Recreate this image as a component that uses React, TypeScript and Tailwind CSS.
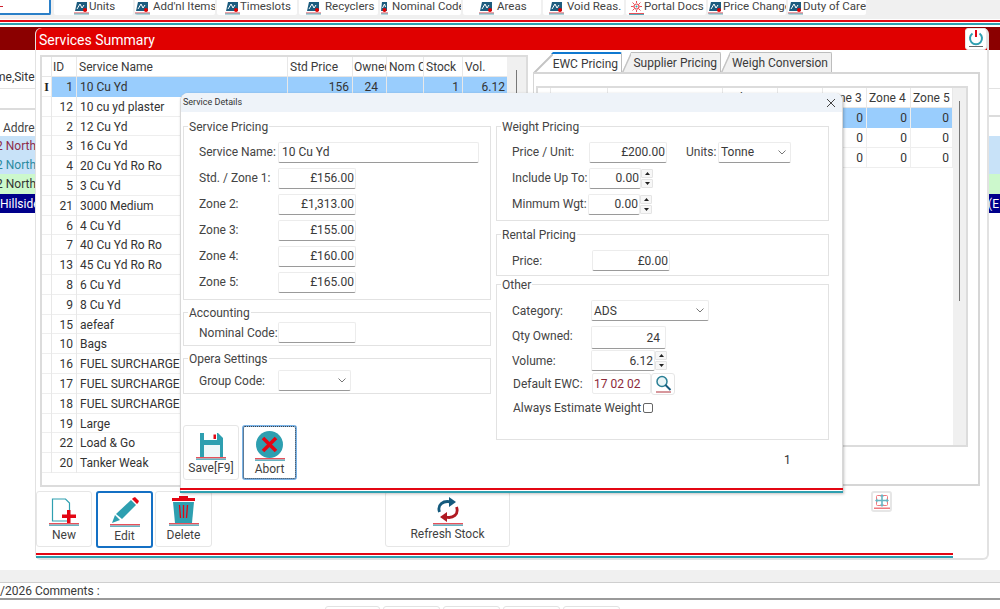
import React from "react";

const tools: [string, number, number, number, string][] = [
  ["Units", 79, 20, 0, "chart"],
  ["Add'nl Items", 80, 0, 3, "chart"],
  ["Timeslots", 80, 8, 0, "chart"],
  ["Recyclers", 79, 7, 4, "chart"],
  ["Nominal Code", 81, 1, 4, "narrow"],
  ["Areas", 78, 16, 3, "chart"],
  ["Void Reas.", 81, 6, 3, "chart"],
  ["Portal Docs", 80, 3, 0, "portal"],
  ["Price Change", 78, 0, 0, "chart"],
  ["Duty of Care", 78, 0, 0, "chart"],
];

const services: [number, string][] = [
  [1, "10 Cu Yd"], [12, "10 cu yd plaster"], [2, "12 Cu Yd"], [3, "16 Cu Yd"], [4, "20 Cu Yd Ro Ro"],
  [5, "3 Cu Yd"], [21, "3000 Medium"], [6, "4 Cu Yd"], [7, "40 Cu Yd Ro Ro"], [13, "45 Cu Yd Ro Ro"],
  [8, "6 Cu Yd"], [9, "8 Cu Yd"], [15, "aefeaf"], [10, "Bags"], [16, "FUEL SURCHARGE"],
  [17, "FUEL SURCHARGE"], [18, "FUEL SURCHARGE"], [19, "Large"], [22, "Load & Go"], [20, "Tanker Weak"],
];

function ToolIcon({ kind }: { kind: string }) {
  if (kind === "portal") {
    return (
      <svg width="15" height="14" viewBox="0 0 15 14" className="shrink-0">
        <circle cx="7.5" cy="5.500" r="2.500" fill="#fff" stroke="#e8505a" strokeWidth="1.200" />
        <path d="M7.500 0v2M7.500 9v2M2 5.500h2.500M10.500 5.500H13M3.500 1.500l1.500 1.500M11.500 1.500L10 3M3.500 9.500L5 8M11.500 9.500L10 8" stroke="#e8505a" strokeWidth="1" />
        <circle cx="7.500" cy="5.500" r="1" fill="#2e9fb0" />
        <rect x="0" y="12" width="15" height="1" fill="#e8505a" />
        <rect x="0" y="13" width="15" height="1" fill="#5aa9b8" />
      </svg>
    );
  }
  if (kind === "narrow") {
    return (
      <svg width="7" height="14" viewBox="0 0 7 14" className="shrink-0">
        <path d="M1 1h5v9H0z" fill="#1d5c7e" />
        <path d="M1.500 7l2-4 1 3" stroke="#fff" strokeWidth="1" fill="none" />
        <circle cx="3.500" cy="9" r="2" fill="#e00000" />
        <rect x="0" y="11.500" width="7" height="1" fill="#d9434e" />
        <rect x="0" y="12.500" width="7" height="1" fill="#5aa9b8" />
      </svg>
    );
  }
  return (
    <svg width="15" height="14" viewBox="0 0 15 14" className="shrink-0">
      <path d="M3 1h10v9H1z" fill="#1d5c7e" />
      <path d="M3 8l3-5 2 4 2-3" stroke="#fff" strokeWidth="1" fill="none" />
      <circle cx="11" cy="9" r="2" fill="#e00000" />
      <rect x="0" y="11.5" width="15" height="1" fill="#d9434e" />
      <rect x="0" y="12.5" width="15" height="1" fill="#5aa9b8" />
    </svg>
  );
}

function Underline({ w = 30 }: { w?: number }) {
  return (
    <svg width={w} height="3" viewBox={`0 0 ${w} 3`} className="block shrink-0">
      <rect width={w} height="1.5" fill="#e8505a" />
      <rect y="1.5" width={w} height="1.5" fill="#68b4c2" />
    </svg>
  );
}

function NewIcon() {
  return (
    <svg width="27" height="25" viewBox="0 0 27 25">
      <path d="M1.500 1h13l4 4v18h-17z" fill="#fff" stroke="#2e9fb0" strokeWidth="1.2" />
      <path d="M16 12h3.500v4.500H25V20h-5.500v5H16v-5h-5v-3.500h5z" fill="#e30613" />
    </svg>
  );
}
function EditIcon() {
  return (
    <svg width="28" height="27" viewBox="0 0 28 27">
      <path d="M22 1l2-1 4 4-1 2-1 1-5-5z" fill="#e30613" />
      <path d="M20 3l5 5L11 22l-6-5z" fill="#2e9fb0" />
      <path d="M4 18l5 5-8 3z" fill="#2e9fb0" />
    </svg>
  );
}
function DeleteIcon() {
  return (
    <svg width="23" height="27" viewBox="0 0 23 27">
      <path d="M7 2V0h9v2h7v3H0V2z" fill="#e30613" />
      <path d="M1 6h21l-2 21H3z" fill="#2e9fb0" />
      <path d="M7.500 9l1 13M11.500 9v13M15.500 9l-1 13" stroke="#e30613" strokeWidth="1.3" />
    </svg>
  );
}
function RefreshIcon() {
  return (
    <svg width="22" height="26" viewBox="0 0 22 26">
      <path d="M2.500 15C0 8 6 3 14 5" stroke="#155a7d" strokeWidth="2.800" fill="none" />
      <path d="M12 0l7 5-7 5z" fill="#155a7d" />
      <path d="M19.500 10c2.500 7-3 12-11 10" stroke="#b01a22" strokeWidth="2.800" fill="none" />
      <path d="M10 25l-7-5 7-5z" fill="#b01a22" />
    </svg>
  );
}
function SaveIcon() {
  return (
    <svg width="25" height="24" viewBox="0 0 25 24">
      <path d="M1 0h18l5 5v19H1z" fill="#2e9fb0" />
      <rect x="5" y="0" width="13" height="7" fill="#fff" />
      <rect x="14.500" y="1.500" width="2.500" height="4.500" fill="#e30613" />
      <rect x="5" y="12" width="16" height="12" fill="#eef7f9" />
    </svg>
  );
}
function AbortIcon() {
  return (
    <svg width="27" height="27" viewBox="0 0 27 27">
      <circle cx="13.5" cy="13.5" r="13.5" fill="#2e9fb0" />
      <path d="M7 7l13 13M20 7L7 20" stroke="#e30613" strokeWidth="3.6" />
    </svg>
  );
}
function PowerIcon() {
  return (
    <svg width="16" height="18" viewBox="0 0 16 18">
      <path d="M4.500 3.500a6 6 0 1 0 7 0" stroke="#2e9fb0" strokeWidth="2" fill="none" />
      <rect x="7" y="0" width="2" height="7" fill="#e30613" />
      <rect x="1" y="16" width="14" height="1" fill="#666" />
    </svg>
  );
}
function SearchIcon() {
  return (
    <svg width="17" height="18" viewBox="0 0 17 18">
      <circle cx="7" cy="6.500" r="5" fill="#eaf5f7" stroke="#2a7f95" strokeWidth="1.500" />
      <path d="M10.500 10l5 5" stroke="#155a7d" strokeWidth="2" />
      <rect x="1" y="16.500" width="15" height="1" fill="#b0303a" />
    </svg>
  );
}
function FitIcon() {
  return (
    <svg width="16" height="16" viewBox="0 0 16 16">
      <rect x="2.500" y="1.500" width="11" height="10" rx="1" fill="none" stroke="#f07a80" strokeWidth="1" />
      <path d="M8 1v11M2 6.500h12" stroke="#68b4c2" strokeWidth="1.600" />
      <path d="M8 0l2 2.500H6zM8 13l2-2.500H6zM1 6.500l2.500-2v4zM15 6.500l-2.500-2v4z" fill="#68b4c2" />
      <rect x="0" y="13.500" width="16" height="1.500" fill="#f07a80" />
    </svg>
  );
}

function Chevron() {
  return (
    <svg width="8" height="5" viewBox="0 0 8 5" className="shrink-0">
      <path d="M.5.5L4 4 7.500.5" fill="none" stroke="#777" strokeWidth="1" />
    </svg>
  );
}

function Group({ title, className, children }: { title: string; className: string; children?: React.ReactNode }) {
  return (
    <div className={"relative border border-[#e2e2e2] " + className}>
      <span className="absolute -top-[9px] left-[4px] bg-white px-[1px] text-[12px] leading-[18px] text-[#444]">{title}</span>
      {children}
    </div>
  );
}

function Field({ value, className, align = "right", wide }: { value: string; className: string; align?: "left" | "right"; wide?: boolean }) {
  return (
    <div
      className={
        "flex items-center shrink-0 rounded-[2px] border border-[#ececec] border-b-[#9a9a9a] bg-white pl-[3px] text-[12px] text-[#3a3a3a] " +
        (wide ? "pr-[5px] " : "pr-[1px] ") +
        (align === "right" ? "justify-end " : "justify-start ") +
        className
      }
    >
      {value}
    </div>
  );
}

function Select({ value, className }: { value: string; className: string }) {
  return (
    <div
      className={
        "flex items-center justify-between shrink-0 rounded-[2px] border border-[#ececec] border-b-[#9a9a9a] bg-white pl-[2px] pr-[4px] text-[12px] text-[#3a3a3a] " +
        className
      }
    >
      <span>{value}</span>
      <Chevron />
    </div>
  );
}

function Spinner() {
  return (
    <div className="flex h-[19px] w-[12px] shrink-0 flex-col gap-[1px]">
      <div className="flex h-[9px] items-center justify-center rounded-[1px] border border-[#e4e4e4] bg-[#f7f7f7] text-[#222]">
        <svg width="5" height="3" viewBox="0 0 5 3"><path d="M2.500 0L5 3H0z" fill="#222" /></svg>
      </div>
      <div className="flex h-[9px] items-center justify-center rounded-[1px] border border-[#e4e4e4] bg-[#f7f7f7]">
        <svg width="5" height="3" viewBox="0 0 5 3"><path d="M0 0h5L2.500 3z" fill="#222" /></svg>
      </div>
    </div>
  );
}

function Label({ children, className = "" }: { children: React.ReactNode; className?: string }) {
  return <span className={"shrink-0 whitespace-nowrap text-[12px] text-[#444] " + className}>{children}</span>;
}

function ActionBtn({
  icon, label, w, u = 30, active, dotted, labelClass = "",
}: {
  icon: React.ReactNode; label: string; w: string; u?: number; active?: boolean; dotted?: boolean; labelClass?: string;
}) {
  return (
    <div
      className={
        "flex shrink-0 flex-col items-center rounded-[3px] bg-white text-[12px] text-[#3f3f3f] " +
        (active ? "border-2 border-[#1470c4] " : dotted ? "border-2 border-[#79b2e6] outline-1 -outline-offset-2 outline-dotted outline-[#444] " : "border border-[#e6e6e6] ") +
        w
      }
    >
      <div className="mt-[2px] flex h-[29px] w-full items-end justify-center">{icon}</div>
      <Underline w={u} />
      <span className={"leading-[17px] whitespace-nowrap " + labelClass}>{label}</span>
    </div>
  );
}

function DoubleLine({ className = "" }: { className?: string }) {
  return (
    <div className={"flex flex-col gap-[1px] " + className}>
      <div className="h-[2px] bg-[#e30613]" />
      <div className="h-[2px] bg-[#2e9fb0]" />
    </div>
  );
}

function ServicesGrid() {
  const cols = "grid grid-cols-[10px_25px_211px_65px_34px_37px_39px_44px] w-[465px]";
  return (
    <div className="flex h-[432px] w-[488px] shrink-0 border-2 border-[#dcdcdc] bg-white">
      <div className="w-[465px] shrink-0">
        <div className={cols + " h-[20px] border-b border-[#e6e6e6] text-[12px] leading-[20px] text-[#3a3a3a]"}>
          <div className="border-r border-[#e8e8e8]" />
          <div className="border-r border-[#e8e8e8] pl-[1px]">ID</div>
          <div className="border-r border-[#e8e8e8] pl-[2px]">Service Name</div>
          <div className="border-r border-[#e8e8e8] pl-[2px]">Std Price</div>
          <div className="overflow-hidden whitespace-nowrap border-r border-[#e8e8e8] pl-[1px]">Owned</div>
          <div className="overflow-hidden whitespace-nowrap border-r border-[#e8e8e8] pl-[2px]">Nom Code</div>
          <div className="border-r border-[#e8e8e8] pl-[2px]">Stock</div>
          <div className="pl-[2px]">Vol.</div>
        </div>
        {services.map(([id, name], i) => (
          <div key={id} className={cols + " h-[19.8px] border-b border-[#eeeeee] text-[12px] leading-[20px] text-[#333]"}>
            <div className="flex items-center justify-center border-r border-[#e8e8e8] font-['Liberation_Serif',serif] text-[12px] font-bold text-[#222]">
              {i === 0 ? "I" : ""}
            </div>
            <div className={"border-r border-[#e8e8e8] pr-[3px] text-right " + (i === 0 ? "bg-[#99cdfd]" : "")}>{id}</div>
            <div className={"whitespace-nowrap border-r border-[#e8e8e8] pl-[3px] " + (i === 0 ? "bg-[#99cdfd]" : "")}>{name}</div>
            <div className={"border-r border-[#e8e8e8] pr-[3px] text-right " + (i === 0 ? "bg-[#99cdfd]" : "")}>{i === 0 ? "156" : ""}</div>
            <div className={"border-r border-[#e8e8e8] pr-[8px] text-right " + (i === 0 ? "bg-[#99cdfd]" : "")}>{i === 0 ? "24" : ""}</div>
            <div className={"border-r border-[#e8e8e8] " + (i === 0 ? "bg-[#99cdfd]" : "")} />
            <div className={"border-r border-[#e8e8e8] pr-[3px] text-right " + (i === 0 ? "bg-[#99cdfd]" : "")}>{i === 0 ? "1" : ""}</div>
            <div className={"pr-[2px] text-right " + (i === 0 ? "bg-[#99cdfd]" : "")}>{i === 0 ? "6.12" : ""}</div>
          </div>
        ))}
      </div>
      <div className="flex flex-1 justify-center bg-[#f0f0f0] pt-[13px]">
        <div className="h-[90px] w-[1px] bg-[#777]" />
      </div>
    </div>
  );
}

function Tab({ label, w, active }: { label: string; w: string; active?: boolean }) {
  return (
    <div
      className={
        "relative flex h-[20px] shrink-0 items-center justify-end rounded-tr-[2px] pr-[3px] pt-[1px] text-[12px] whitespace-nowrap text-[#3a3a3a] " +
        (active
          ? "border-t-2 border-r border-t-[#0f78d0] border-r-[#bdbdbd] bg-white [clip-path:polygon(20px_0,100%_0,100%_100%,0_100%)] "
          : "border-t border-r border-[#bdbdbd] bg-[#f1f1f1] [clip-path:polygon(9px_0,100%_0,100%_100%,0_100%)] ") +
        w
      }
    >
      <svg width={active ? 20 : 9} height="20" className="absolute left-0 top-0">
        <line x1="0" y1="20" x2={active ? 20 : 9} y2="0" stroke="#c4c4c4" strokeWidth="2" />
      </svg>
      {label}
    </div>
  );
}

function TabsPanel() {
  const cols = "grid grid-cols-[13px_57px_115px_55px_45px_44px_44px_42px] w-[415px]";
  const head = ["", "", "Description", "Std Price", "Zone 2", "Zone 3", "Zone 4", "Zone 5"];
  return (
    <div className="-mt-[3px] flex w-[447px] shrink-0 flex-col">
      <div className="flex h-[20px]">
        <Tab label="EWC Pricing" w="w-[89px]" active />
        <Tab label="Supplier Pricing" w="w-[99px]" />
        <Tab label="Weigh Conversion" w="w-[111px]" />
      </div>
      <div className="relative h-[414px] border-r-2 border-b-2 border-t-2 border-l border-[#d6d6d6] bg-white pl-[2px] pt-[12px]">
        <div className="flex h-[361px] w-[432px] border-2 border-[#dcdcdc]">
          <div className="w-[415px] shrink-0">
            <div className={cols + " h-[20px] border-b border-[#e6e6e6] text-[12px] leading-[20px] text-[#3a3a3a]"}>
              {head.map((h, i) => (
                <div key={i} className="whitespace-nowrap border-r border-[#e8e8e8] pl-[2px]">{h}</div>
              ))}
            </div>
            {[0, 1, 2].map((r) => (
              <div key={r} className={cols + " h-[20px] border-b border-[#eeeeee] text-[12px] leading-[20px] text-[#333]"}>
                {head.map((_, i) => (
                  <div key={i} className={"border-r border-[#eeeeee] pr-[3px] text-right " + (r === 0 && i > 0 ? "bg-[#99cdfd]" : "")}>
                    {i >= 5 ? "0" : ""}
                  </div>
                ))}
              </div>
            ))}
          </div>
          <div className="flex flex-1 justify-center bg-[#f0f0f0] pt-[13px]">
            <div className="h-[200px] w-[1px] bg-[#777]" />
          </div>
        </div>
      </div>
    </div>
  );
}

function SummaryWindow() {
  return (
    <div className="absolute left-[35px] top-[28px] flex h-[532px] w-[954px] flex-col rounded-[6px] border-r-2 border-b-2 border-l border-[#e2e2e2] bg-white">
      <div className="flex h-[22px] shrink-0 items-center justify-between rounded-t-[6px] bg-[#e00000] pl-[3px]">
        <span className="translate-y-[1px] text-[14px] text-white">Services Summary</span>
        <div className="flex h-[22px] w-[22px] items-center justify-center rounded-[3px] border border-[#e6e6e6] bg-white">
          <PowerIcon />
        </div>
      </div>
      <div className="flex gap-[5px] pl-[4px] pt-[5px]">
        <ServicesGrid />
        <TabsPanel />
      </div>
      <div className="mt-[4px] flex items-start">
        <ActionBtn icon={<NewIcon />} label="New" w="h-[56px] w-[56px]" labelClass="mt-[1px]" />
        <ActionBtn icon={<EditIcon />} label="Edit" w="ml-[4px] h-[57px] w-[57px]" active labelClass="mt-[1px]" />
        <ActionBtn icon={<DeleteIcon />} label="Delete" w="ml-[2px] h-[56px] w-[57px]" labelClass="mt-[1px]" />
        <ActionBtn icon={<RefreshIcon />} label="Refresh Stock" w="ml-[173px] h-[56px] w-[125px]" />
        <div className="ml-[361px] flex h-[21px] w-[21px] items-center justify-center rounded-[3px] border-2 border-[#e6e6e6] bg-white">
          <FitIcon />
        </div>
      </div>
      <DoubleLine className="mt-[5px] w-[917px]" />
    </div>
  );
}

function DetailsDialog() {
  return (
    <div className="absolute left-[180px] top-[93px] flex h-[400px] w-[663px] flex-col rounded-t-[8px] border-x border-[#d8d8d8] bg-white shadow-[1px_1px_3px_rgba(0,0,0,0.25)]">
      <div className="flex h-[19px] shrink-0 items-center justify-between rounded-t-[8px] bg-[#eef3f9] pl-[2px] pr-[6px]">
        <span className="text-[9px] text-[#333]">Service Details</span>
        <svg width="10" height="10" viewBox="0 0 10 10"><path d="M1 1l8 8M9 1L1 9" stroke="#444" strokeWidth="1" /></svg>
      </div>
      <div className="flex flex-1 gap-[5px] pl-[2px] pt-[14px]">
        <div className="flex w-[308px] shrink-0 flex-col">
          <Group title="Service Pricing" className="h-[174px]">
            <div className="flex flex-col gap-[6px] pl-[15px] pt-[15px]">
              <div className="flex h-[20px] items-center">
                <Label className="w-[79px]">Service Name:</Label>
                <Field value="10 Cu Yd" align="left" className="h-[21px] w-[201px]" />
              </div>
              {[
                ["Std. / Zone 1:", "£156.00"],
                ["Zone 2:", "£1,313.00"],
                ["Zone 3:", "£155.00"],
                ["Zone 4:", "£160.00"],
                ["Zone 5:", "£165.00"],
              ].map(([l, v]) => (
                <div key={l} className="flex h-[20px] items-center">
                  <Label className="w-[79px]">{l}</Label>
                  <Field value={v} className="h-[21px] w-[78px]" />
                </div>
              ))}
            </div>
          </Group>
          <Group title="Accounting" className="mt-[12px] h-[34px]">
            <div className="mt-[9px] flex h-[21px] items-center pl-[15px]">
              <Label className="w-[79px]">Nominal Code:</Label>
              <Field value="" className="h-[21px] w-[78px]" />
            </div>
          </Group>
          <Group title="Opera Settings" className="mt-[12px] h-[36px]">
            <div className="mt-[11px] flex h-[21px] items-center pl-[15px]">
              <Label className="w-[79px]">Group Code:</Label>
              <Select value="" className="h-[21px] w-[73px]" />
            </div>
          </Group>
          <div className="mt-[31px] flex gap-[3px]">
            <ActionBtn icon={<SaveIcon />} label="Save[F9]" w="h-[55px] w-[56px]" />
            <ActionBtn icon={<AbortIcon />} label="Abort" w="h-[55px] w-[55px]" dotted />
          </div>
        </div>
        <div className="flex w-[333px] shrink-0 flex-col">
          <Group title="Weight Pricing" className="h-[95px]">
            <div className="flex flex-col gap-[6px] pl-[15px] pt-[15px]">
              <div className="flex h-[20px] items-center">
                <Label className="w-[77px]">Price / Unit:</Label>
                <Field value="£200.00" className="h-[21px] w-[78px]" />
                <Label className="ml-[19px] w-[32px]">Units:</Label>
                <Select value="Tonne" className="h-[21px] w-[73px]" />
              </div>
              <div className="flex h-[20px] items-center">
                <Label className="w-[77px]">Include Up To:</Label>
                <Field value="0.00" className="h-[21px] w-[52px]" />
                <Spinner />
              </div>
              <div className="flex h-[20px] items-center">
                <Label className="w-[76px]">Minmum Wgt:</Label>
                <Field value="0.00" className="h-[21px] w-[52px]" />
                <Spinner />
              </div>
            </div>
          </Group>
          <Group title="Rental Pricing" className="mt-[13px] h-[42px]">
            <div className="mt-[15px] flex h-[21px] items-center pl-[15px]">
              <Label className="w-[80px]">Price:</Label>
              <Field value="£0.00" className="h-[21px] w-[78px]" />
            </div>
          </Group>
          <Group title="Other" className="mt-[8px] h-[156px]">
            <div className="flex flex-col pl-[15px] pt-[15px]">
              <div className="flex h-[21px] items-center">
                <Label className="w-[79px]">Category:</Label>
                <Select value="ADS" className="h-[21px] w-[118px]" />
              </div>
              <div className="mt-[5px] flex h-[23px] items-center">
                <Label className="w-[79px] -translate-y-[2px]">Qty Owned:</Label>
                <Field value="24" wide className="h-[23px] w-[75px]" />
              </div>
              <div className="mt-[1px] flex h-[21px] items-center">
                <Label className="w-[79px]">Volume:</Label>
                <Field value="6.12" className="h-[21px] w-[64px]" />
                <Spinner />
              </div>
              <div className="mt-[2px] flex h-[21px] items-center pl-[1px]">
                <Label className="w-[79px]">Default EWC:</Label>
                <div className="flex h-[21px] w-[59px] items-center rounded-[2px] border border-[#ececec] px-[1px] text-[12px] text-[#8d2a3a]">17 02 02</div>
                <div className="flex h-[22px] w-[24px] items-center justify-center rounded-[3px] border border-[#e6e6e6] bg-white"><SearchIcon /></div>
              </div>
              <div className="mt-[5px] flex h-[18px] items-center gap-[2px] pl-[1px]">
                <Label>Always Estimate Weight</Label>
                <div className="h-[10px] w-[10px] rounded-[2px] border border-[#666] bg-white" />
              </div>
            </div>
          </Group>
          <div className="mt-[11px] pl-[288px] text-[12px] text-[#333]">1</div>
        </div>
      </div>
      <DoubleLine className="-mx-[1px]" />
    </div>
  );
}

export default function App() {
  return (
    <div className="relative h-[609px] w-[1000px] overflow-hidden bg-white font-['Roboto',sans-serif]">
      <div className="flex h-[19px] items-start bg-[#f0f0f0]">
        <div className="-ml-[2px] flex h-[15px] w-[53px] items-center rounded-b-[2px] border-r-2 border-b-2 border-[#2a7fc8] bg-white pl-[2px]">
          <div className="h-[1px] w-[3px] bg-[#d02030]" />
        </div>
        <div className="ml-[3px] flex gap-[2px]">
          {tools.map(([t, w, pad, gap, kind]) => (
            <div key={t} style={{ width: w, paddingLeft: pad, gap }} className="flex h-[15px] items-center overflow-hidden rounded-b-[2px] bg-white text-[11.5px] leading-[13px] whitespace-nowrap text-[#444]">
              <ToolIcon kind={kind} />
              <span className="pb-[3px]">{t}</span>
            </div>
          ))}
        </div>
      </div>
      <div className="flex h-[8px] flex-col gap-[1px] pt-[1px]">
        <div className="h-[2px] bg-[#e30613]" />
        <div className="h-[2px] bg-[#2e9fb0]" />
      </div>
      <div className="h-[23px] bg-[#8b0000]" />
      <div className="h-[39px] border-b border-[#e2e2e2] pt-[18px] text-[12px] leading-[18px] text-[#333]">
        <span className="-ml-[5px] block">me,Site</span>
      </div>
      <div className="flex h-[21px] items-start justify-between">
        <div className="h-[21px] w-[100px] border-b-2 border-[#dcdcdc]" />
        <div className="h-[28px] w-[100px] border-b-2 border-[#dcdcdc]" />
      </div>
      <div className="flex h-[26px] items-center pl-[3px] pt-[9px] text-[12px] text-[#444]">Address</div>
      <div className="flex h-[19px] items-center bg-[#c8e2f8] text-[12px] text-[#8d2a4a]"><span className="-ml-[4px]">2 North</span></div>
      <div className="flex h-[19px] items-center bg-[#c8e2f8] text-[12px] text-[#2b8aa0]"><span className="-ml-[4px]">2 North</span></div>
      <div className="flex h-[20px] items-center bg-[#ccf8cc] text-[12px] text-[#333]"><span className="-ml-[4px]">2 North</span></div>
      <div className="flex h-[19px] items-center justify-between bg-[#00008b] text-[12px] text-white">
        <span>Hillside</span>
        <span className="pr-[1px]">(E</span>
      </div>

      <div className="absolute inset-x-0 bottom-0 flex h-[39px] flex-col">
        <div className="h-[12px] shrink-0 bg-[#f0f0f0]" />
        <div className="flex h-[18px] shrink-0 items-center border-t border-b-2 border-t-[#cfcfcf] border-b-[#9a9a9a] bg-white text-[12px] text-[#3a3a3a]">/2026 Comments :</div>
        <div className="flex min-h-0 flex-1 overflow-hidden pl-[325px] pt-[6px]">
          {["w-[55px]", "ml-[3px] w-[57px]", "ml-[3px] w-[57px]", "ml-[3px] w-[57px]", "ml-[3px] w-[57px]"].map((c, i) => (
            <div key={i} className={"h-[6px] rounded-t-[3px] border border-[#e2e2e2] " + c} />
          ))}
        </div>
      </div>

      <SummaryWindow />
      <DetailsDialog />
    </div>
  );
}
